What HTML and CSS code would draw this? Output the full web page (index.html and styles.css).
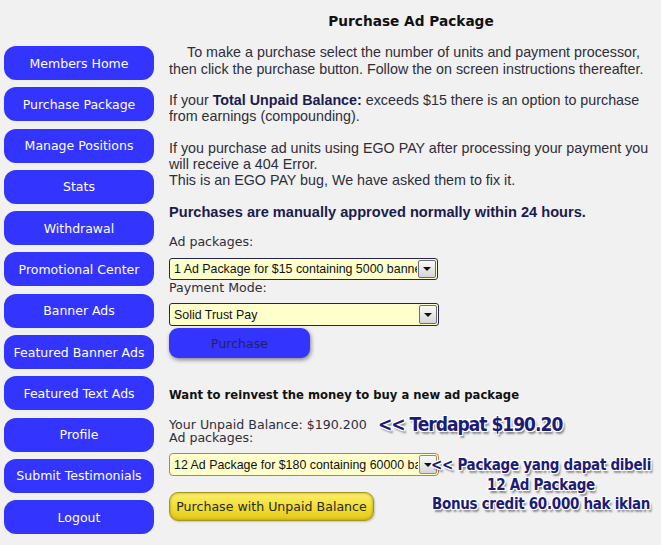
FILE: index.html
```html
<!DOCTYPE html>
<html>
<head>
<meta charset="utf-8">
<link rel="stylesheet" href="styles.css">
</head>
<body>
<div class="page">
  <nav class="sidebar">
    <a class="nav-btn">Members Home</a>
    <a class="nav-btn">Purchase Package</a>
    <a class="nav-btn">Manage Positions</a>
    <a class="nav-btn">Stats</a>
    <a class="nav-btn">Withdrawal</a>
    <a class="nav-btn">Promotional Center</a>
    <a class="nav-btn">Banner Ads</a>
    <a class="nav-btn">Featured Banner Ads</a>
    <a class="nav-btn">Featured Text Ads</a>
    <a class="nav-btn">Profile</a>
    <a class="nav-btn">Submit Testimonials</a>
    <a class="nav-btn">Logout</a>
  </nav>
  <main class="main">
    <h1 class="title">Purchase Ad Package</h1>
    <p class="para p1 indent">To make a purchase select the number of units and payment processor, then click the purchase button. Follow the on screen instructions thereafter.</p>
    <p class="para p2">If your <b class="hl">Total Unpaid Balance:</b> exceeds $15 there is an option to purchase from earnings (compounding).</p>
    <p class="para p3">If you purchase ad units using EGO PAY after processing your payment you will receive a 404 Error.<br>This is an EGO PAY bug, We have asked them to fix it.</p>
    <p class="para notice">Purchases are manually approved normally within 24 hours.</p>
    <div class="label lbl1">Ad packages:</div>
    <div class="select sel1"><span class="sel-text">1 Ad Package for $15 containing 5000 banner impressions</span><span class="sel-arrow"></span></div>
    <div class="label lbl2">Payment Mode:</div>
    <div class="select sel2"><span class="sel-text">Solid Trust Pay</span><span class="sel-arrow"></span></div>
    <div class="btn-blue">Purchase</div>
    <div class="reinvest">Want to reinvest the money to buy a new ad package</div>
    <div class="label balance">Your Unpaid Balance: $190.200<br>Ad packages:</div>
    <div class="select sel3"><span class="sel-text">12 Ad Package for $180 containing 60000 banner impressions</span><span class="sel-arrow orange"></span></div>
    <div class="btn-yellow">Purchase with Unpaid Balance</div>
  </main>
  <div class="note note1">&lt;&lt; Terdapat $190.20</div>
  <div class="note note2">&lt;&lt; Package yang dapat dibeli<br>12 Ad Package<br>Bonus credit 60.000 hak iklan</div>
</div>
</body>
</html>
```

FILE: styles.css
```css
html, body {
  margin: 0;
  padding: 0;
  background: #f1f1f1;
}
.page {
  position: relative;
  display: flex;
  width: 661px;
  height: 545px;
  overflow: hidden;
}
.sidebar {
  display: flex;
  flex-direction: column;
  gap: 7.3px;
  padding: 46px 0 0 4px;
  width: 150px;
  flex: none;
}
.nav-btn {
  display: flex;
  align-items: center;
  justify-content: center;
  height: 34px;
  background: #3434ff;
  border-radius: 12px;
  color: #ffffff;
  font-family: "DejaVu Sans", Verdana, sans-serif;
  font-size: 12.5px;
  white-space: nowrap;
}
.main {
  margin-left: 15px;
  width: 484px;
  padding-top: 13px;
  color: #2e2e3a;
  font-family: "Liberation Sans", Arial, sans-serif;
}
.title {
  margin: 0;
  text-align: center;
  font-family: "DejaVu Sans", Verdana, sans-serif;
  font-size: 13.7px;
  line-height: 17px;
  font-weight: bold;
  color: #111;
}
.para {
  margin: 0;
  font-size: 14.3px;
  line-height: 16px;
}
.p1 { margin-top: 14px; line-height: 17px; }
.indent { text-indent: 18px; }
.p2 { margin-top: 14px; }
.p3 { margin-top: 16px; }
.hl { color: #1b1b4e; }
.notice {
  margin-top: 16px;
  font-size: 14.6px;
  font-weight: bold;
  color: #1b1b4e;
}
.label {
  font-family: "DejaVu Sans", Verdana, sans-serif;
  font-size: 12.6px;
  color: #2e2e3a;
}
.lbl1 { margin-top: 14px; line-height: 16px; }
.lbl2 { line-height: 15px; }
.select {
  display: flex;
  align-items: stretch;
  background: #ffffcc;
  border: 1px solid #25254a;
  border-radius: 3px;
  width: 269px;
  box-sizing: border-box;
  overflow: hidden;
}
.sel-text {
  flex: 1;
  overflow: hidden;
  white-space: nowrap;
  padding-left: 4px;
  font-family: "Liberation Sans", Arial, sans-serif;
  font-size: 12.4px;
  color: #111;
  display: flex;
  align-items: center;
}
.sel-arrow {
  position: relative;
  flex: none;
  width: 16px;
  margin: 1px;
  border: 1px solid #6a6a80;
  border-radius: 2px;
  background: linear-gradient(#fafafa, #d6d6d6);
}
.sel-arrow::after {
  content: "";
  position: absolute;
  left: 4px;
  top: 50%;
  margin-top: -2px;
  border-left: 4px solid transparent;
  border-right: 4px solid transparent;
  border-top: 4px solid #111;
}
.sel1 { margin-top: 8px; height: 22px; }
.sel2 { margin-top: 8px; height: 23px; width: 270px; }
.sel3 {
  margin-top: 9px;
  height: 23px;
  width: 270px;
  border-color: #b9843a;
  border-radius: 4px;
}
.sel-arrow.orange { border-color: #a08a70; }
.btn-blue {
  margin-top: 2px;
  width: 141px;
  height: 30px;
  display: flex;
  align-items: center;
  justify-content: center;
  background: #3434ff;
  border-radius: 9px;
  box-shadow: 1px 2px 4px rgba(0, 0, 0, 0.45);
  color: #23235a;
  font-family: "DejaVu Sans", Verdana, sans-serif;
  font-size: 12.5px;
}
.reinvest {
  margin-top: 29px;
  font-family: "DejaVu Sans", Verdana, sans-serif;
  font-size: 11.6px;
  line-height: 16px;
  font-weight: bold;
  color: #111;
}
.balance {
  margin-top: 15px;
  line-height: 13px;
}
.btn-yellow {
  margin-top: 16px;
  width: 205px;
  height: 29px;
  box-sizing: border-box;
  display: flex;
  align-items: center;
  justify-content: center;
  background: linear-gradient(#fbef6a, #efdc2c 60%, #e2c91a);
  border: 1px solid #a89420;
  border-radius: 9px;
  box-shadow: inset 0 0 3px rgba(120, 100, 0, 0.6), 1px 1px 2px rgba(0, 0, 0, 0.2);
  color: #2a2a2a;
  font-family: "DejaVu Sans", Verdana, sans-serif;
  font-size: 12.6px;
}
.note {
  position: absolute;
  font-family: "DejaVu Sans Condensed", "DejaVu Sans", sans-serif;
  font-weight: bold;
  color: #1c1c78;
  text-shadow:
    -1px -1px 0 #fff, 1px -1px 0 #fff, -1px 1px 0 #fff, 1px 1px 0 #fff,
    0 -1px 0 #fff, 0 1px 0 #fff, -1px 0 0 #fff, 1px 0 0 #fff,
    2px 3px 2px rgba(0, 0, 0, 0.45);
  white-space: nowrap;
}
.note1 {
  left: 378px;
  top: 412px;
  font-size: 19px;
  letter-spacing: -1px;
  line-height: 24px;
}
.note2 {
  left: 427px;
  top: 456px;
  width: 228px;
  text-align: center;
  font-size: 15px;
  letter-spacing: -0.3px;
  line-height: 19.5px;
}
```
